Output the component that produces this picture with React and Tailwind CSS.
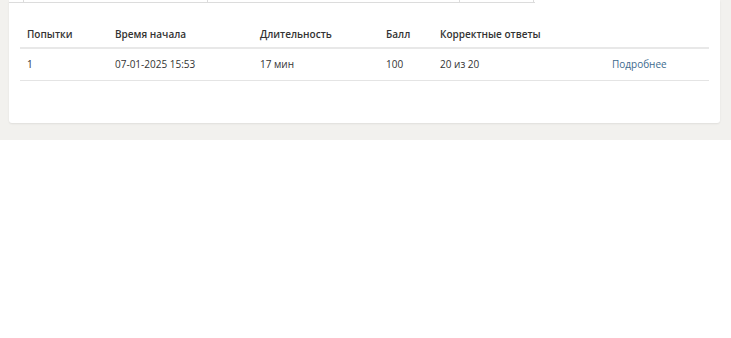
export default function App() {
    const cols = [
        { label: "Попытки", w: "w-[88px]" },
        { label: "Время начала", w: "w-[145px]" },
        { label: "Длительность", w: "w-[126px]" },
        { label: "Балл", w: "w-[54px]" },
        { label: "Корректные ответы", w: "w-[172px]" },
        { label: "", w: "flex-1" },
    ];
    const row = ["1", "07-01-2025 15:53", "17 мин", "100", "20 из 20"];

    return (
        <div className="w-[731px] h-[338px] bg-white font-['Open_Sans',sans-serif] text-[10px]">
            <div className="bg-[#f2f1ee] h-[140px] pl-[9px] pr-[11px]">
                <div className="bg-white h-[123px] rounded-b-[3px] shadow-[0_1px_2px_rgba(0,0,0,0.08)] relative">
                    {/* bottom of previous table */}
                    <div className="flex h-[3px] w-[526px] border-b border-[#dcdcdc]">
                        <div className="w-[15px] border-r border-[#dcdcdc]" />
                        <div className="w-[184px] border-r border-[#dcdcdc]" />
                        <div className="w-[252px] border-r border-[#dcdcdc]" />
                        <div className="w-[74px] border-r border-[#dcdcdc]" />
                    </div>

                    <div className="mx-[11px] mt-[18px]">
                        <div className="flex h-[28px] items-center border-b-2 border-[#e8e8e8] font-semibold text-[#333]">
                            {cols.map((c, i) => (
                                <div key={i} className={`${c.w} pl-[7px]`}>{c.label}</div>
                            ))}
                        </div>
                        <div className="flex h-[32px] items-center border-b border-[#e4e4e4] text-[#333]">
                            {row.map((v, i) => (
                                <div key={i} className={`${cols[i].w} pl-[7px]`}>{v}</div>
                            ))}
                            <div className="flex-1 pl-[7px] text-[#3d6a8e]">Подробнее</div>
                        </div>
                    </div>
                </div>
            </div>
        </div>
    );
}
